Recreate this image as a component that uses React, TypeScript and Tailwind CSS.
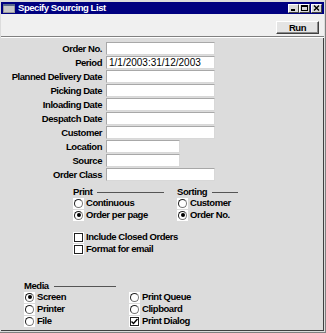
import React from "react";

const bold = "font-['Liberation_Sans',Arial,sans-serif] font-bold text-[9.5px] tracking-[-0.45px] text-black whitespace-nowrap";

function Field({ label, width, value }: { label: string; width: string; value?: string }) {
  return (
    <div className="flex h-[14px] items-start">
      <div className={`w-[101px] h-[13px] leading-[13px] flex justify-end ${bold}`}>{label}</div>
      <div
        className={`ml-[4px] ${width} h-[13px] bg-white border border-[#a8a8a8] border-b-[#d8d8d8] border-r-[#d8d8d8] pl-[2px] leading-[11px] text-[10px] font-['Liberation_Sans',sans-serif] text-black`}
      >
        {value}
      </div>
    </div>
  );
}

function Radio({ label, checked }: { label: string; checked?: boolean }) {
  return (
    <div className="flex items-center h-[12px]">
      <div className="w-[11px] h-[11px] shrink-0 bg-white flex items-center justify-center">
        <div className="w-[9px] h-[9px] rounded-full border border-[#222] border-r-[#777] border-b-[#777] bg-white flex items-center justify-center">
          {checked && <div className="w-[4px] h-[4px] rounded-full bg-black" />}
        </div>
      </div>
      <span className={`ml-[2px] leading-[12px] ${bold}`}>{label}</span>
    </div>
  );
}

function Check({ label, checked }: { label: string; checked?: boolean }) {
  return (
    <div className="flex items-center h-[12px]">
      <div className="w-[11px] h-[11px] shrink-0 bg-white flex items-center justify-center">
        <div className="w-[9px] h-[9px] border border-[#222] bg-white flex items-center justify-center">
          {checked && (
            <svg width="7" height="7" viewBox="0 0 7 7">
              <path d="M0.5 3.5 L2.5 5.5 L6.5 1" stroke="#000" strokeWidth="1.4" fill="none" />
            </svg>
          )}
        </div>
      </div>
      <span className={`ml-[2px] leading-[12px] ${bold}`}>{label}</span>
    </div>
  );
}

function Header({ label, width }: { label: string; width: string }) {
  return (
    <div className={`flex items-center h-[11px] ${width}`}>
      <span className={`leading-[11px] ${bold}`}>{label}</span>
      <div className="flex-1 h-px bg-[#555] ml-[5px] mt-[2px]" />
    </div>
  );
}

function TitleButton({ children }: { children: React.ReactNode }) {
  return (
    <div className="w-[11px] h-[9px] bg-[#d8d8d8] border border-white border-r-[#404040] border-b-[#404040] flex items-center justify-center">
      {children}
    </div>
  );
}

export default function App() {
  return (
    <div className="w-[326px] h-[333px] bg-[#dcdcdc] flex flex-col pt-[2px] pl-[1px] pr-[2px] pb-[2px] shadow-[inset_-1px_-1px_0_#808080]">
      {/* Title bar */}
      <div className="h-[12px] bg-[#000080] flex items-center pl-[2px] pr-[2px]">
        <svg width="12" height="9" viewBox="0 0 12 9" className="mr-[3px]">
          <rect x="0" y="0" width="12" height="9" fill="#9a9a9a" />
          <rect x="1" y="2" width="10" height="6" fill="#c8c8c8" />
          <rect x="0" y="0" width="12" height="2" fill="#5a6a8a" />
        </svg>
        <span className={`${bold} !text-white leading-[12px]`}>Specify Sourcing List</span>
        <div className="ml-auto flex items-center">
          <TitleButton>
            <div className="w-[4px] h-[2px] bg-black mt-[4px] -ml-[2px]" />
          </TitleButton>
          <TitleButton>
            <div className="w-[7px] h-[6px] border border-black border-t-2" />
          </TitleButton>
          <div className="ml-[1px]">
            <TitleButton>
              <svg width="7" height="6" viewBox="0 0 7 6">
                <path d="M1 0.5 L6 5.5 M6 0.5 L1 5.5" stroke="#000" strokeWidth="1.4" />
              </svg>
            </TitleButton>
          </div>
        </div>
      </div>

      {/* Toolbar */}
      <div className="h-[22px] bg-[#f0f0f0] flex items-start justify-end pr-[5px] pt-[7px]">
        <button
          className={`w-[43px] h-[13px] bg-[#e4e4e4] border border-white border-r-[#404040] border-b-[#404040] shadow-[inset_-1px_-1px_0_#8a8a8a] leading-[10px] flex items-center justify-center ${bold}`}
        >
          Run
        </button>
      </div>
      <div className="h-[2px] border-t border-[#808080] border-b border-b-white" />

      {/* Form */}
      <div className="flex-1 bg-[#dcdcdc] border-r border-b border-[#404040] flex flex-col pt-[4px]">
        <Field label="Order No." width="w-[109px]" />
        <Field label="Period" width="w-[109px]" value="1/1/2003:31/12/2003" />
        <Field label="Planned Delivery Date" width="w-[109px]" />
        <Field label="Picking Date" width="w-[109px]" />
        <Field label="Inloading Date" width="w-[109px]" />
        <Field label="Despatch Date" width="w-[109px]" />
        <Field label="Customer" width="w-[109px]" />
        <Field label="Location" width="w-[74px]" />
        <Field label="Source" width="w-[74px]" />
        <Field label="Order Class" width="w-[109px]" />

        <div className="flex mt-[4px] ml-[72px]">
          <div className="w-[91px]">
            <Header label="Print" width="w-[91px]" />
            <Radio label="Continuous" />
            <Radio label="Order per page" checked />
          </div>
          <div className="ml-[13px] w-[61px]">
            <Header label="Sorting" width="w-[61px]" />
            <Radio label="Customer" />
            <Radio label="Order No." checked />
          </div>
        </div>

        <div className="mt-[10px] ml-[72px]">
          <Check label="Include Closed Orders" />
          <Check label="Format for email" />
        </div>

        <div className="mt-[25px] ml-[23px]">
          <Header label="Media" width="w-[92px]" />
          <div className="flex">
            <div className="w-[105px]">
              <Radio label="Screen" checked />
              <Radio label="Printer" />
              <Radio label="File" />
            </div>
            <div>
              <Radio label="Print Queue" />
              <Radio label="Clipboard" />
              <Check label="Print Dialog" checked />
            </div>
          </div>
        </div>
      </div>
    </div>
  );
}
